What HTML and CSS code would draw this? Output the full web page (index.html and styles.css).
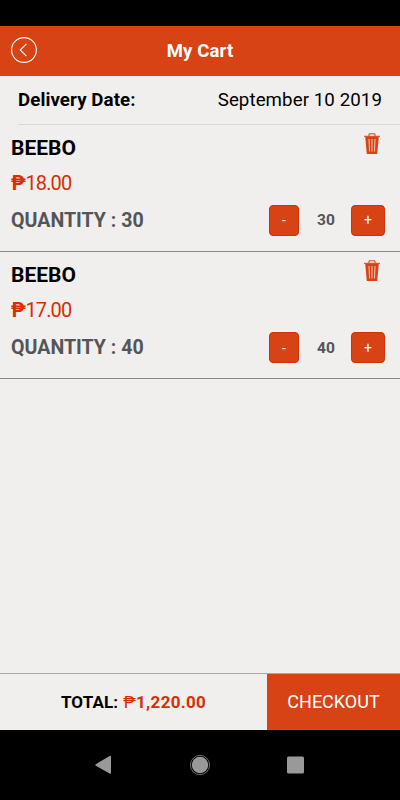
FILE: index.html
```html
<!DOCTYPE html>
<html lang="en">
<head>
<meta charset="utf-8">
<title>My Cart</title>
<link rel="stylesheet" href="styles.css">
</head>
<body>
<div class="status"></div>
<header class="header">
  <svg class="back" viewBox="0 0 26 26"><circle cx="13" cy="13" r="12.4"/><path d="M15.4 6.8 9.2 13l6.2 6.2"/></svg>
  <h1>My Cart</h1>
</header>
<main class="main">
  <div class="delivery"><b>Delivery Date:</b><span>September 10 2019</span></div>
  <section class="item">
    <div class="row name"><h2>BEEBO</h2>
      <svg class="trash" viewBox="0 0 16 22"><path class="wire" d="M5 3V.8h6V3M0 3.3h16"/><path class="can" d="M1.2 3.5h13.6L13.2 21H2.8Z"/><path class="slot" d="M5 6 5.500 18.500M8 6V18.500M11 6 10.500 18.500"/></svg>
    </div>
    <div class="price"><span class="peso">₱</span><span class="num">18.00</span></div>
    <div class="row qty"><span class="label">QUANTITY : 30</span>
      <div class="stepper"><button class="minus">-</button><span class="count">30</span><button class="plus">+</button></div>
    </div>
  </section>
  <section class="item">
    <div class="row name"><h2>BEEBO</h2>
      <svg class="trash" viewBox="0 0 16 22"><path class="wire" d="M5 3V.8h6V3M0 3.3h16"/><path class="can" d="M1.2 3.5h13.6L13.2 21H2.8Z"/><path class="slot" d="M5 6 5.500 18.500M8 6V18.500M11 6 10.500 18.500"/></svg>
    </div>
    <div class="price"><span class="peso">₱</span><span class="num">17.00</span></div>
    <div class="row qty"><span class="label">QUANTITY : 40</span>
      <div class="stepper"><button class="minus">-</button><span class="count">40</span><button class="plus">+</button></div>
    </div>
  </section>
</main>
<footer class="footer">
  <div class="total"><span>TOTAL:</span> <span class="amount"><span class="psign">₱</span>1,220.00</span></div>
  <button class="checkout">CHECKOUT</button>
</footer>
<nav class="nav">
  <svg viewBox="0 0 400 70"><path d="M95.8 34.2 109.6 26q1.4-.8 1.4.8v16q0 1.6-1.4.8L95.8 35.8q-1-.8 0-1.6Z"/><circle cx="200" cy="35" r="8.2"/><circle class="ring" cx="200" cy="35" r="9.6"/><rect x="287" y="26.5" width="17" height="17" rx="1.5"/></svg>
</nav>
</body>
</html>
```
FILE: styles.css
```css
* { box-sizing: border-box; }
body { margin: 0; width: 400px; height: 800px; display: flex; flex-direction: column; background: #f0efed; font-family: Roboto, sans-serif; color: #000; overflow: hidden; }
h1, h2 { margin: 0; }
button { border: 0; padding: 0; font-family: inherit; color: #fff; background: #d84315; }
.status { height: 26px; background: #000; }
.header { height: 49.5px; background: #d84315; display: grid; grid-template-columns: 26px 1fr 26px; align-items: center; padding: 0 11px 2px; }
.header h1 { color: #fff; font-size: 18.5px; font-weight: 700; text-align: center; line-height: 24px; padding-top: 2px; letter-spacing: .15px; }
.back { width: 26px; height: 26px; fill: none; stroke: #fff; stroke-width: 1.1; }
.main { flex: 1; }
.delivery { height: 49px; margin-left: 18px; padding: 0 18px 0 0; border-bottom: 1px solid #d9d8d7; display: flex; align-items: center; justify-content: space-between; font-size: 18.7px; line-height: 22px; }
.delivery b { font-weight: 700; letter-spacing: .08px; }
.delivery span { letter-spacing: .08px; }
.item { height: 127.3px; padding: 8px 15px 0 11px; border-bottom: 1px solid #8a8988; }
.item + .item { padding-top: 8.7px; }
.row { display: flex; justify-content: space-between; }
.name { height: 29px; padding-right: 5.5px; }
.name h2 { font-size: 21px; font-weight: 700; line-height: 30px; }
.trash { width: 16px; height: 22px; }
.wire { fill: none; stroke: #d84315; stroke-width: 1; }
.can { fill: #d84315; }
.slot { fill: none; stroke: #f3c9b9; stroke-width: 1; }
.price { height: 43px; line-height: 42px; font-size: 20px; color: #dd2c00; display: flex; }
.peso { font-weight: 700; width: 14.5px; }
.num { letter-spacing: -.9px; font-weight: 400; }
.qty { height: 31px; align-items: center; }
.label { font-size: 19.6px; line-height: 22px; font-weight: 700; color: #545557; padding-top: 1px; }
.stepper { display: grid; grid-template-columns: 30px 52px 34px; align-items: center; text-align: center; }
.stepper button { height: 31px; border-radius: 4px; border: 1px solid #d32f0a; font-size: 14px; }
.count { font-size: 15.5px; font-weight: 700; color: #545557; padding-left: 2px; }
.footer { height: 57px; display: grid; grid-template-columns: 267px 133px; border-top: 1px solid #a9a8a7; }
.total { display: flex; align-items: center; justify-content: center; gap: 5px; font-size: 17px; font-weight: 700; padding-bottom: 1px; }
.amount { color: #d52f09; letter-spacing: .3px; }
.total > span:first-child { letter-spacing: .15px; }
.psign { font-weight: 400; }
.checkout { font-size: 18px; padding-bottom: 1px; }
.nav { height: 70px; background: #000; }
.nav svg { display: block; width: 400px; height: 70px; fill: #999; }
.nav .ring { fill: none; stroke: #999; stroke-width: .7; }
```
